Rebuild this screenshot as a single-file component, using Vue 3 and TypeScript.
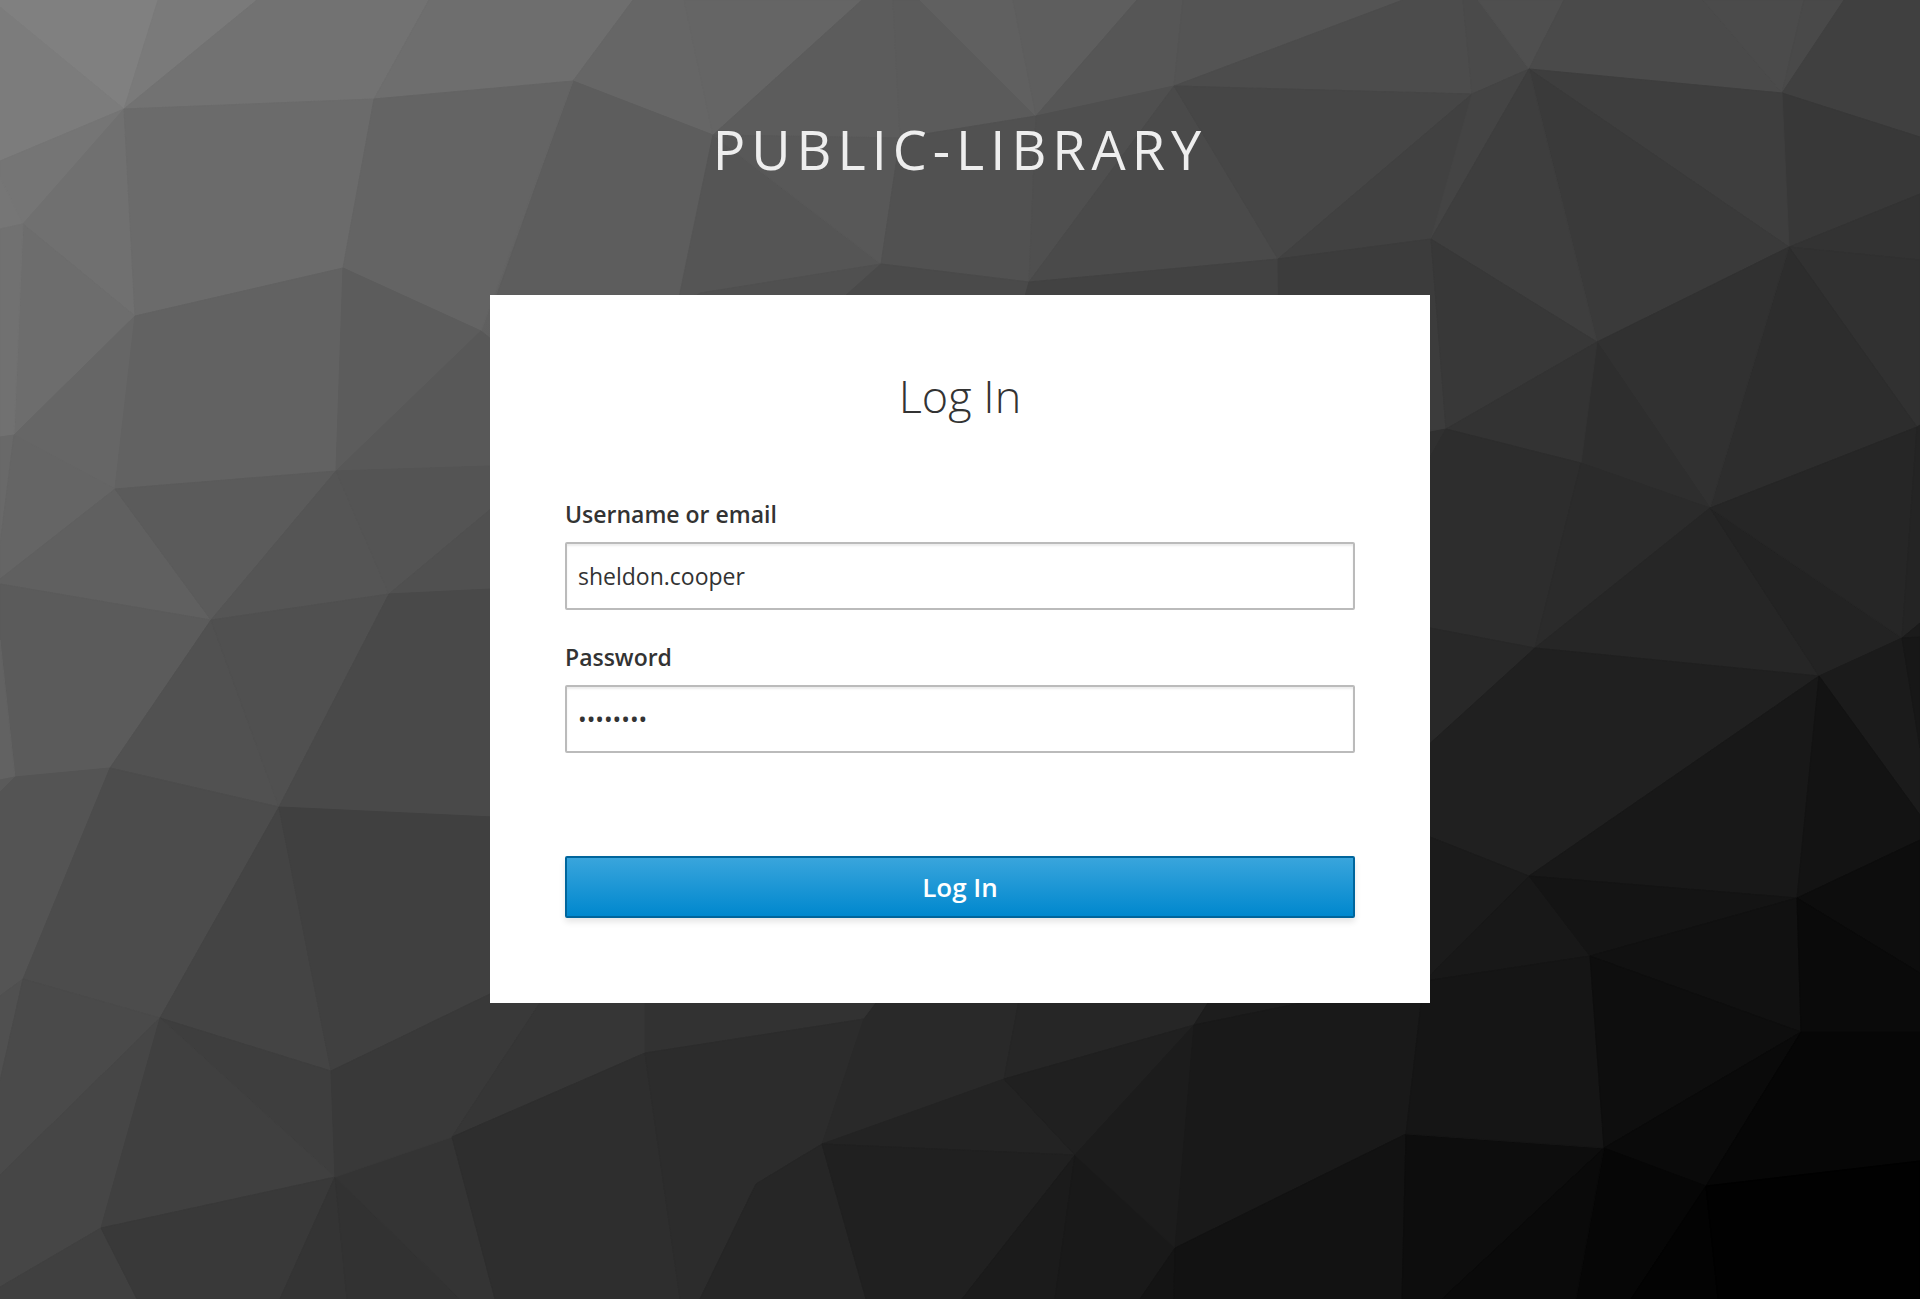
<script setup lang="ts">
import { ref } from 'vue'

interface Facet {
  points: string
  shade: string
}

const username = ref('sheldon.cooper')
const password = ref('passw0rd')

const facet = (shade: string, points: string): Facet => ({ points, shade: `#${shade}${shade}${shade}` })

const facets: Facet[] = [
  // top band
  facet('80', '0,7 0,0 158,0 124,109'),
  facet('7a', '158,0 257,0 124,109'),
  facet('7c', '0,7 124,109 0,161'),
  facet('72', '257,0 429,0 374,99 124,109'),
  facet('6e', '429,0 633,0 573,81 374,99'),
  facet('66', '633,0 684,0 713,135 573,81'),
  facet('65', '684,0 862,0 713,135'),
  facet('5c', '862,0 893,0 900,138 713,135'),
  facet('5b', '893,0 920,0 1036,116 900,138'),
  facet('60', '920,0 1013,0 1036,116'),
  facet('5e', '1013,0 1137,0 1036,116'),
  facet('56', '1137,0 1183,0 1174,86 1036,116'),
  facet('54', '1183,0 1403,0 1174,86'),
  facet('4c', '1403,0 1463,0 1472,94 1174,86'),
  facet('4a', '1463,0 1478,0 1529,69 1472,94'),
  facet('4f', '1478,0 1564,0 1529,69'),
  facet('4a', '1564,0 1703,0 1782,93 1529,69'),
  facet('4b', '1703,0 1804,0 1782,93'),
  facet('49', '1804,0 1844,0 1782,93'),
  facet('40', '1844,0 1920,0 1920,137 1782,93'),
  // upper middle
  facet('5d', '573,81 713,135 679,295 497,295'),
  facet('55', '713,135 881,264 679,298'),
  facet('58', '713,135 900,138 881,264'),
  facet('50', '881,264 845,295 690,300 700,293'),
  facet('51', '900,138 1036,116 1029,282 881,264'),
  facet('4f', '1036,116 1174,86 1029,282'),
  facet('4a', '1174,86 1278,259 1029,282'),
  facet('46', '1174,86 1472,94 1278,259'),
  facet('41', '1472,94 1431,239 1278,259'),
  facet('44', '1472,94 1529,69 1431,239'),
  facet('4a', '881,264 1029,282 1025,300 845,296'),
  facet('42', '1029,282 1278,259 1280,300 1024,300'),
  facet('3c', '1278,259 1431,239 1446,429 1280,430'),
  // left side
  facet('75', '0,161 124,109 23,224 0,177'),
  facet('76', '0,177 23,224 0,229'),
  facet('70', '124,109 135,316 23,224'),
  facet('6b', '124,109 374,99 343,268 135,316'),
  facet('64', '374,99 573,81 481,331 343,268'),
  facet('6d', '23,224 135,316 14,435'),
  facet('71', '0,229 23,224 14,435 0,437'),
  facet('66', '135,316 115,489 14,435'),
  facet('62', '135,316 343,268 336,471 115,489'),
  facet('5c', '343,268 481,331 336,471'),
  facet('58', '481,331 492,340 492,466 336,471'),
  facet('69', '0,437 14,435 0,545'),
  facet('65', '14,435 115,489 0,580 0,545'),
  facet('60', '115,489 211,620 0,584 0,579'),
  facet('5b', '115,489 336,471 211,620'),
  facet('55', '336,471 389,594 211,620'),
  facet('54', '336,471 492,466 492,508 389,594'),
  facet('50', '389,594 492,508 492,589'),
  facet('5b', '0,584 211,620 110,768 15,777 0,640'),
  facet('62', '0,640 15,777 0,780'),
  facet('5a', '0,780 15,777 0,792'),
  facet('51', '211,620 279,807 110,768'),
  facet('50', '211,620 389,594 279,807'),
  facet('49', '389,594 492,589 492,817 279,807'),
  facet('54', '15,777 110,768 23,979 0,996 0,792'),
  facet('4c', '110,768 279,807 160,1018 23,979'),
  facet('44', '279,807 331,1071 160,1018'),
  facet('40', '279,807 492,817 492,993 331,1071'),
  facet('50', '0,996 23,979 0,1081'),
  facet('4a', '23,979 160,1018 0,1175 0,1081'),
  facet('46', '160,1018 101,1228 0,1287 0,1175'),
  facet('3e', '160,1018 331,1071 335,1177'),
  facet('40', '160,1018 335,1177 101,1228'),
  // bottom band
  facet('40', '0,1287 101,1228 137,1299 0,1299'),
  facet('39', '101,1228 335,1177 280,1299 137,1299'),
  facet('34', '335,1177 280,1299 347,1299'),
  facet('32', '335,1177 347,1299 460,1299'),
  facet('34', '335,1177 452,1137 495,1299 460,1299'),
  facet('39', '331,1071 492,993 545,995 452,1137 335,1177'),
  facet('36', '452,1137 545,995 645,995 645,1053'),
  facet('2e', '452,1137 645,1053 680,1299 495,1299'),
  facet('32', '645,1053 645,995 880,995 864,1019'),
  facet('2c', '645,1053 864,1019 822,1144 756,1184 700,1299 680,1299'),
  facet('29', '864,1019 882,995 1020,995 1004,1079 822,1144'),
  facet('26', '1004,1079 1020,995 1213,995 1194,1025'),
  facet('23', '822,1144 1004,1079 1075,1155'),
  facet('20', '1004,1079 1194,1025 1075,1155'),
  facet('26', '756,1184 822,1144 866,1299 700,1299'),
  facet('20', '822,1144 1075,1155 962,1299 866,1299'),
  facet('1b', '1075,1155 962,1299 1055,1299'),
  facet('19', '1075,1155 1175,1248 1140,1299 1055,1299'),
  facet('1c', '1075,1155 1194,1025 1175,1248'),
  facet('14', '1175,1248 1140,1299 1174,1299'),
  facet('1d', '1194,1025 1213,995 1340,995'),
  facet('19', '1194,1025 1340,995 1422,995 1406,1134 1175,1248'),
  facet('12', '1175,1248 1406,1134 1402,1299 1174,1299'),
  facet('0d', '1406,1134 1604,1148 1442,1299 1402,1299'),
  // right side
  facet('38', '1920,137 1782,93 1789,247 1920,194'),
  facet('3e', '1529,69 1782,93 1789,247'),
  facet('3a', '1529,69 1789,247 1597,342'),
  facet('3e', '1529,69 1597,342 1431,239'),
  facet('38', '1431,239 1597,342 1446,429'),
  facet('33', '1789,247 1920,194 1920,260'),
  facet('31', '1789,247 1920,260 1920,425 1917,427'),
  facet('2d', '1789,247 1917,427 1710,508'),
  facet('31', '1597,342 1789,247 1710,508'),
  facet('2e', '1597,342 1710,508 1581,463'),
  facet('33', '1597,342 1581,463 1446,429'),
  facet('30', '1425,433 1446,429 1425,466'),
  facet('2d', '1446,429 1581,463 1535,648 1425,627 1425,466'),
  facet('2b', '1581,463 1710,508 1535,648'),
  facet('26', '1710,508 1819,676 1535,648'),
  facet('23', '1710,508 1902,638 1819,676'),
  facet('26', '1710,508 1917,427 1902,638'),
  facet('24', '1917,427 1920,425 1920,623 1902,638'),
  facet('1b', '1902,638 1920,623 1920,638'),
  facet('28', '1425,627 1535,648 1425,748'),
  facet('20', '1535,648 1819,676 1529,876 1425,835 1425,748'),
  facet('1b', '1819,676 1902,638 1920,748 1920,815'),
  facet('17', '1902,638 1920,637 1920,748'),
  facet('18', '1819,676 1797,898 1529,876'),
  facet('13', '1819,676 1920,815 1920,840 1797,898'),
  facet('1b', '1425,835 1529,876 1425,981'),
  facet('18', '1425,981 1529,876 1590,956'),
  facet('14', '1529,876 1797,898 1590,956'),
  facet('11', '1590,956 1797,898 1801,1032'),
  facet('0d', '1797,898 1920,840 1920,973'),
  facet('0a', '1797,898 1920,973 1920,1032 1801,1032'),
  facet('15', '1425,981 1590,956 1604,1148 1406,1134 1422,995'),
  facet('0e', '1590,956 1801,1032 1604,1148'),
  facet('0a', '1604,1148 1801,1032 1706,1186'),
  facet('06', '1801,1032 1920,1032 1920,1161 1706,1186'),
  facet('06', '1604,1148 1706,1186 1631,1299 1576,1299'),
  facet('0a', '1604,1148 1576,1299 1442,1299'),
  facet('03', '1706,1186 1718,1299 1631,1299'),
  facet('01', '1706,1186 1920,1161 1920,1299 1718,1299'),
]
</script>

<template>
  <div class="login-page">
    <svg class="backdrop" viewBox="0 0 1920 1299" preserveAspectRatio="xMidYMid slice" aria-hidden="true">
      <defs>
        <linearGradient id="base" x1="0" y1="0" x2="1" y2="1">
          <stop offset="0" stop-color="#808080" />
          <stop offset="1" stop-color="#000000" />
        </linearGradient>
      </defs>
      <rect width="1920" height="1299" fill="url(#base)" />
      <polygon
        v-for="(f, i) in facets"
        :key="i"
        :points="f.points"
        :fill="f.shade"
        :stroke="f.shade"
        stroke-width="1"
        stroke-linejoin="round"
      />
    </svg>

    <header class="realm">PUBLIC-LIBRARY</header>

    <main class="card">
      <h1 class="card-title">Log In</h1>
      <form class="form" @submit.prevent>
        <div class="field">
          <label for="username">Username or email</label>
          <input id="username" v-model="username" type="text" autocomplete="off" />
        </div>
        <div class="field">
          <label for="password">Password</label>
          <input id="password" v-model="password" type="password" autocomplete="off" />
        </div>
        <button class="submit" type="submit">Log In</button>
      </form>
    </main>
  </div>
</template>

<style>
body {
  background: #303030;
}
</style>

<style scoped>
.login-page {
  position: relative;
  box-sizing: border-box;
  min-height: 100vh;
  padding: 111px 24px 72px;
  display: flex;
  flex-direction: column;
  align-items: center;
  font-family: "Open Sans", "Noto Sans", sans-serif;
  color: #333333;
}

.backdrop {
  position: absolute;
  inset: 0;
  width: 100%;
  height: 100%;
}

.realm {
  position: relative;
  margin-bottom: 108px;
  font-size: 54px;
  line-height: 76px;
  letter-spacing: 6px;
  color: #eeeeee;
}

.card {
  position: relative;
  box-sizing: border-box;
  width: 100%;
  max-width: 940px;
  padding: 71px 75px 85px;
  background: #ffffff;
}

.card-title {
  margin: 0 0 72px;
  font-size: 45px;
  font-weight: 300;
  line-height: 60px;
  text-align: center;
}

.form {
  display: flex;
  flex-direction: column;
  gap: 31px;
}

.field {
  display: flex;
  flex-direction: column;
  gap: 12px;
}

.field label {
  font-size: 23px;
  font-weight: 600;
  line-height: 32px;
}

.field input {
  box-sizing: border-box;
  width: 100%;
  height: 68px;
  padding: 0 11px;
  border: 2px solid #bbbbbb;
  border-radius: 2px;
  outline: none;
  background: #ffffff;
  box-shadow: inset 0 2px 2px rgba(3, 3, 3, 0.08);
  font-family: inherit;
  font-size: 23px;
  color: #333333;
}

.submit {
  height: 62px;
  margin-top: 72px;
  padding: 0 16px;
  border: 2px solid #00659c;
  border-radius: 2px;
  background: linear-gradient(to bottom, #39a5dc 0%, #0088ce 100%);
  box-shadow: 0 4px 6px rgba(3, 3, 3, 0.1);
  font-family: inherit;
  font-size: 26px;
  font-weight: 600;
  line-height: 36px;
  color: #ffffff;
}
</style>
